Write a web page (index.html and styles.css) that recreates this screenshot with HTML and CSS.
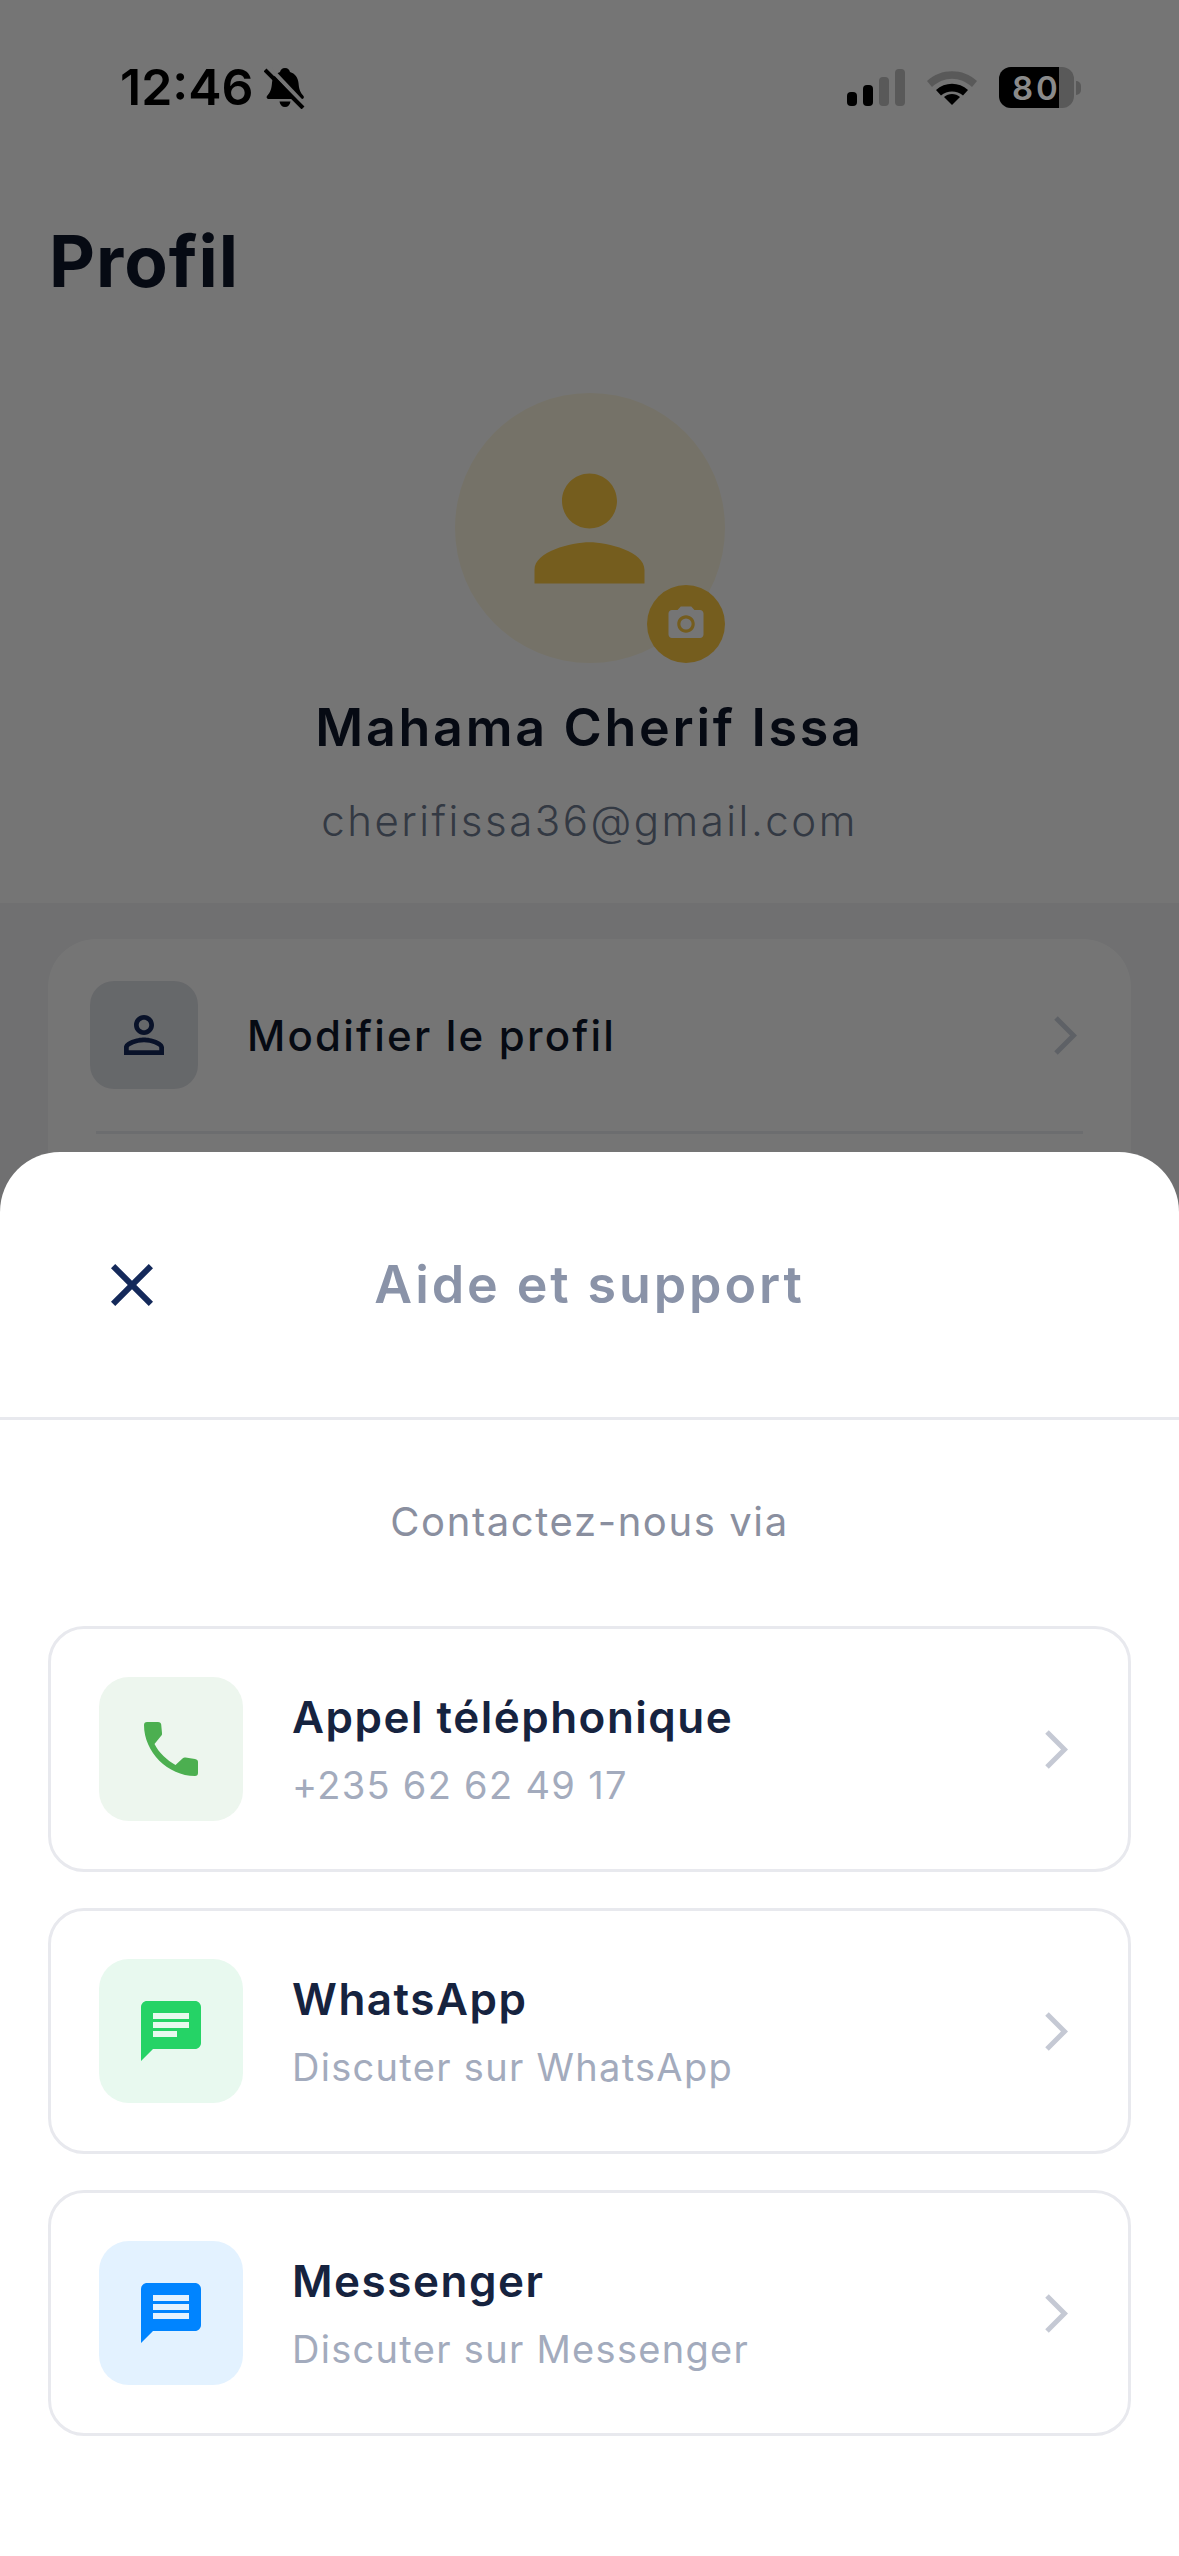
FILE: index.html
```html
<!DOCTYPE html>
<html lang="fr">
<head>
<meta charset="utf-8">
<title>Profil</title>
<link rel="stylesheet" href="styles.css">
</head>
<body>
<div class="screen">
  <main class="page">
    <section class="hero">
      <h1 class="page-title">Profil</h1>
      <div class="avatar">
        <svg class="avatar-icon" viewBox="0 0 24 24"><path d="M12 12c2.21 0 4-1.79 4-4s-1.79-4-4-4-4 1.79-4 4 1.79 4 4 4zm0 2c-2.67 0-8 1.34-8 4v2h16v-2c0-2.66-5.33-4-8-4z"/></svg>
        <span class="avatar-badge">
          <svg class="badge-icon" viewBox="0 0 24 24"><circle cx="12" cy="12" r="3.2"/><path d="M9 2L7.17 4H4c-1.1 0-2 .9-2 2v12c0 1.1.9 2 2 2h16c1.1 0 2-.9 2-2V6c0-1.1-.9-2-2-2h-3.17L15 2H9zm3 15c-2.76 0-5-2.24-5-5s2.24-5 5-5 5 2.24 5 5-2.24 5-5 5z"/></svg>
        </span>
      </div>
      <p class="profile-name">Mahama Cherif Issa</p>
      <p class="profile-email">cherifissa36@gmail.com</p>
    </section>
    <section class="settings">
      <div class="settings-card">
        <div class="settings-row">
          <span class="settings-icon">
            <svg viewBox="0 0 24 24"><path d="M12 5.9c1.16 0 2.1.94 2.1 2.1s-.94 2.1-2.1 2.1S9.9 9.16 9.9 8s.94-2.1 2.1-2.1m0 9c2.97 0 6.1 1.46 6.1 2.1v1.1H5.9V17c0-.64 3.13-2.1 6.1-2.1M12 4C9.79 4 8 5.79 8 8s1.79 4 4 4 4-1.79 4-4-1.79-4-4-4zm0 9c-2.67 0-8 1.34-8 4v3h16v-3c0-2.66-5.33-4-8-4z"/></svg>
          </span>
          <span class="settings-label">Modifier le profil</span>
          <svg class="settings-chevron" viewBox="0 0 23 39"><path d="M2 2l17.500 17.500L2 37"/></svg>
        </div>
      </div>
    </section>
  </main>

  <div class="scrim"></div>

  <header class="status-bar">
    <div class="status-left">
      <span class="status-time">12:46</span>
      <svg class="bell" viewBox="0 0 42 42"><path d="M21 1c3 0 4.500 2 5 4 5 1.500 8 5.500 8.500 11 .5 6 1.500 9 5 13 1 1.500 0 3-1.500 3H4.500C3 32 2 30.500 3 29c3.500-4 4.500-7 5-13C8.500 10.500 11.500 6.500 16 5c.5-2 2-4 5-4z"/><path d="M15.500 34.500h11c-.5 3.500-2.500 5.500-5.500 5.500s-5-2-5.500-5.500z"/><path class="bell-cut" d="M5 0l36 38"/><path class="bell-slash" d="M1 3l38 38"/></svg>
    </div>
    <div class="status-right">
      <span class="signal">
        <i class="bar bar-1"></i><i class="bar bar-2"></i><i class="bar bar-3"></i><i class="bar bar-4"></i>
      </span>
      <svg class="wifi" viewBox="0 0 50 36"><path class="wifi-off" d="M0 12C14-1 36-1 50 12l-5 6C33 7 17 7 5 18z"/><path d="M9 21c9-8.500 23-8.500 32 0l-5 5.500c-6-5.500-16-5.500-22 0z"/><path d="M25 36l-8-8c4.500-4 11.500-4 16 0z"/></svg>
      <span class="battery"><span class="battery-body"><span class="battery-fill"></span><span class="battery-level">80</span></span><i class="battery-tip"></i></span>
    </div>
  </header>

  <aside class="sheet">
    <div class="sheet-header">
      <svg class="sheet-close" viewBox="0 0 24 24"><path d="M19 6.410L17.590 5 12 10.590 6.410 5 5 6.410 10.590 12 5 17.590 6.410 19 12 13.410 17.590 19 19 17.590 13.410 12z"/></svg>
      <h2 class="sheet-title">Aide et support</h2>
    </div>
    <div class="sheet-body">
      <p class="sheet-intro">Contactez-nous via</p>
      <div class="contact-list">
        <div class="contact-card">
          <span class="contact-icon contact-icon-phone">
            <svg viewBox="0 0 54 54"><path d="M3 0h11c2 0 3 1 3.200 2.500L18 11c.2 1 0 2-.8 2.800L10.500 22C15 31 23 38 31.500 43l7-6.500c1-1 2-1.200 3-1l9.500 1.500c2 .3 3 1.500 3 3V51c0 2-1 3-3 3C24 54 0 30 0 3c0-2 1-3 3-3z"/></svg>
          </span>
          <span class="contact-text">
            <span class="contact-name">Appel téléphonique</span>
            <span class="contact-detail">+235 62 62 49 17</span>
          </span>
          <svg class="contact-chevron" viewBox="0 0 23 39"><path d="M2 2l17.500 17.500L2 37"/></svg>
        </div>
        <div class="contact-card">
          <span class="contact-icon contact-icon-whatsapp">
            <svg viewBox="0 0 60 60"><path fill-rule="evenodd" d="M6 0h48c3.300 0 6 2.700 6 6v36c0 3.300-2.700 6-6 6H12L0 60V6C0 2.700 2.700 0 6 0zM12 12v6h36v-6zm0 9v6h36v-6zm0 9v6h24v-6z"/></svg>
          </span>
          <span class="contact-text">
            <span class="contact-name">WhatsApp</span>
            <span class="contact-detail">Discuter sur WhatsApp</span>
          </span>
          <svg class="contact-chevron" viewBox="0 0 23 39"><path d="M2 2l17.500 17.500L2 37"/></svg>
        </div>
        <div class="contact-card">
          <span class="contact-icon contact-icon-messenger">
            <svg viewBox="0 0 60 60"><path fill-rule="evenodd" d="M6 0h48c3.300 0 6 2.700 6 6v36c0 3.300-2.700 6-6 6H12L0 60V6C0 2.700 2.700 0 6 0zM12 12v6h36v-6zm0 9v6h36v-6zm0 9v6h36v-6z"/></svg>
          </span>
          <span class="contact-text">
            <span class="contact-name">Messenger</span>
            <span class="contact-detail">Discuter sur Messenger</span>
          </span>
          <svg class="contact-chevron" viewBox="0 0 23 39"><path d="M2 2l17.500 17.500L2 37"/></svg>
        </div>
      </div>
    </div>
  </aside>
</div>
</body>
</html>
```

FILE: styles.css
```css
* { box-sizing: border-box; }
html, body { margin: 0; padding: 0; }
body { width: 1179px; height: 2556px; overflow: hidden; font-family: Inter, "Liberation Sans", sans-serif; background: #fff; }
h1, h2, p { margin: 0; font-weight: normal; }
svg { display: block; }

.screen { position: relative; width: 1179px; height: 2556px; overflow: hidden; }
.page { display: flex; flex-direction: column; height: 100%; background: #f3f4f6; }

.hero { height: 903px; background: #fff; padding: 220px 48px 0; display: flex; flex-direction: column; align-items: center; }
.page-title { align-self: flex-start; margin-left: 1px; font-size: 71px; line-height: 82px; font-weight: 700; color: #0f172a; letter-spacing: 1px; }
.avatar { position: relative; width: 270px; height: 270px; margin-top: 91px; border-radius: 50%; background: #fff9e3; display: flex; align-items: center; justify-content: center; }
.avatar-icon { width: 165px; height: 165px; fill: #ffca43; }
.avatar-badge { position: absolute; right: 0; bottom: 0; width: 78px; height: 78px; border-radius: 50%; background: #ffca43; display: flex; align-items: center; justify-content: center; }
.badge-icon { width: 42px; height: 42px; fill: #fff; }
.profile-name { margin-top: 33px; font-size: 52px; line-height: 64px; font-weight: 600; color: #0f172a; letter-spacing: 2.700px; }
.profile-email { margin-top: 35px; font-size: 42px; line-height: 52px; font-weight: 300; color: #6f7c92; letter-spacing: 2.500px; }

.settings { padding: 36px 48px 0; }
.settings-card { background: #fff; border-radius: 48px; padding: 42px 48px 0 42px; height: 400px; }
.settings-row { display: flex; align-items: center; gap: 49px; padding-bottom: 42px; border-bottom: 3px solid #eceef1; margin-left: 6px; }
.settings-row .settings-icon { margin-left: -6px; }
.settings-icon { width: 108px; height: 108px; border-radius: 24px; background: #dfe2e8; display: flex; align-items: center; justify-content: center; }
.settings-icon svg { width: 60px; height: 60px; fill: #14295a; }
.settings-label { flex: 1; font-size: 42px; font-weight: 500; color: #0f172a; letter-spacing: 2.200px; }
.settings-chevron { width: 23px; height: 39px; margin-right: 6px; fill: none; stroke: #ced3de; stroke-width: 5; }

.scrim { position: absolute; inset: 0; background: rgba(0, 0, 0, 0.54); }

.status-bar { position: absolute; left: 0; right: 0; top: 0; height: 130px; padding: 62px 98px 0 120px; display: flex; justify-content: space-between; color: #000; }
.status-left { display: flex; gap: 10px; }
.status-time { font-size: 50px; line-height: 50px; font-weight: 600; letter-spacing: 0; }
.bell { width: 42px; height: 42px; margin-top: 5px; fill: #000; }
.bell-slash { stroke: #000; stroke-width: 4; fill: none; }
.bell-cut { stroke: #757575; stroke-width: 4; fill: none; }
.status-right { display: flex; align-items: flex-start; gap: 22px; }
.signal { display: flex; align-items: flex-end; gap: 6px; height: 37px; margin-top: 7px; }
.bar { display: block; width: 10px; border-radius: 4px; background: #000; }
.bar-1 { height: 14px; }
.bar-2 { height: 21px; }
.bar-3 { height: 29px; background: #595959; }
.bar-4 { height: 37px; background: #595959; }
.wifi { width: 50px; height: 36px; margin-top: 7px; fill: #000; }
.wifi-off { fill: #595959; }
.battery { display: flex; align-items: center; gap: 2px; margin-top: 5px; }
.battery-body { position: relative; width: 75px; height: 41px; border-radius: 12px; background: #595959; overflow: hidden; display: flex; align-items: center; padding-left: 13px; }
.battery-fill { position: absolute; left: 0; top: 0; bottom: 0; width: 60px; background: #000; }
.battery-level { position: relative; font-size: 33px; font-weight: 600; color: #8a8a8a; letter-spacing: 3px; }
.battery-tip { display: block; width: 5px; height: 14px; border-radius: 0 7px 7px 0; background: #595959; }

.sheet { position: absolute; left: 0; right: 0; top: 1152px; bottom: 0; background: #fff; border-radius: 60px 60px 0 0; }
.sheet-header { position: relative; height: 268px; border-bottom: 3px solid #e8e9ee; display: flex; align-items: center; justify-content: center; }
.sheet-close { position: absolute; left: 96px; top: 97px; width: 72px; height: 72px; fill: #14295a; }
.sheet-title { font-size: 52px; font-weight: 600; color: #8a93a8; letter-spacing: 2.900px; }
.sheet-body { padding: 0 48px; }
.sheet-intro { margin-top: 78px; font-size: 40px; line-height: 48px; text-align: center; color: #8a8f9f; letter-spacing: 1.600px; }
.contact-list { margin-top: 80px; display: flex; flex-direction: column; gap: 36px; }
.contact-card { height: 246px; border: 3px solid #e8e9ee; border-radius: 36px; padding: 0 60px 0 48px; display: flex; align-items: center; gap: 49px; background: #fff; }
.contact-icon { width: 144px; height: 144px; border-radius: 30px; display: flex; align-items: center; justify-content: center; flex: none; }
.contact-icon svg { width: 60px; height: 60px; }
.contact-icon-phone { background: #edf6ee; }
.contact-icon-phone svg { fill: #4caf50; width: 54px; height: 54px; }
.contact-icon-whatsapp { background: #e8f9ef; }
.contact-icon-whatsapp svg { fill: #25d366; }
.contact-icon-messenger { background: #e3f2ff; }
.contact-icon-messenger svg { fill: #0084ff; }
.contact-text { flex: 1; display: flex; flex-direction: column; gap: 18px; margin-top: 0; }
.contact-name { font-size: 44px; line-height: 54px; font-weight: 600; color: #16233f; letter-spacing: 1.500px; }
.contact-detail { font-size: 38px; line-height: 46px; color: #a3abbd; letter-spacing: 1.300px; }
.contact-chevron { width: 23px; height: 39px; fill: none; stroke: #c5c9d4; stroke-width: 5; }
```
